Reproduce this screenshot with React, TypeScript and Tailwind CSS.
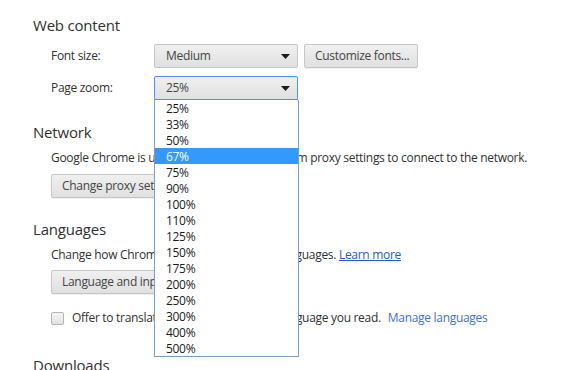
import React from 'react';

const zoomLevels = ['25%', '33%', '50%', '67%', '75%', '90%', '100%', '110%', '125%', '150%', '175%', '200%', '250%', '300%', '400%', '500%'];

const Arrow = () => (
  <svg width="9" height="5" viewBox="0 0 9 5" className="shrink-0">
    <path d="M0 0 H9 L4.5 5 Z" fill="#1a1a1a" />
  </svg>
);

const Button: React.FC<{ children: React.ReactNode; className?: string }> = ({ children, className = '' }) => (
  <div
    className={`h-[24px] flex items-center whitespace-nowrap overflow-hidden px-[10px] border border-[#c5c5c5] rounded-[2px] bg-gradient-to-b from-[#f0f0f0] to-[#e0e0e0] shadow-[0_1px_0_rgba(0,0,0,0.06)] text-[#444] ${className}`}
  >
    {children}
  </div>
);

export default function App() {
  return (
    <div
      className="relative w-[577px] h-[370px] overflow-hidden bg-white text-[12px] tracking-[-0.3px] text-[#303030]"
      style={{ fontFamily: '"Open Sans", "Noto Sans", sans-serif' }}
    >
      <div className="pl-[33px] pt-[15px]">
        {/* Web content */}
        <h2 className="text-[15px] leading-[20px] tracking-[-0.2px]">Web content</h2>
        <div className="pl-[18px] mt-[9px] flex flex-col gap-[8px]">
          <div className="flex items-center h-[24px]">
            <span className="w-[103px]">Font size:</span>
            <div className="w-[144px] h-[24px] flex items-center justify-between pl-[11px] pr-[7px] border border-[#c5c5c5] rounded-[2px] bg-gradient-to-b from-[#f0f0f0] to-[#e0e0e0] text-[#444]">
              Medium
              <Arrow />
            </div>
            <Button className="ml-[6px] w-[114px]">Customize fonts...</Button>
          </div>
          <div className="flex items-center h-[24px]">
            <span className="w-[103px]">Page zoom:</span>
            <div className="w-[144px] h-[24px] flex items-center justify-between pl-[11px] pr-[7px] border border-[#4d90fe] rounded-t-[2px] bg-gradient-to-b from-[#f0f0f0] to-[#e0e0e0] text-[#444]">
              25%
              <Arrow />
            </div>
          </div>
        </div>

        {/* Network */}
        <h2 className="text-[15px] leading-[20px] tracking-[-0.2px] mt-[22px]">Network</h2>
        <div className="pl-[18px]">
          <p className="mt-[6px] leading-[20px]">
            Google Chrome is using your computer's system proxy settings to connect to the network.
          </p>
          <Button className="mt-[6px] w-[150px]">Change proxy settings...</Button>
        </div>

        {/* Languages */}
        <h2 className="text-[15px] leading-[20px] tracking-[-0.2px] mt-[21px]">Languages</h2>
        <div className="pl-[18px]">
          <p className="mt-[6px] leading-[20px]">
            Change how Chrome handles and displays languages.{' '}
            <span className="text-[#1a5ad6] underline">Learn more</span>
          </p>
          <Button className="mt-[5px] w-[170px]">Language and input settings...</Button>
          <div className="flex items-center mt-[16px] h-[16px]">
            <div className="w-[13px] h-[13px] border border-[#b5b5b5] rounded-[2px] bg-gradient-to-b from-[#f4f4f4] to-[#e2e2e2]" />
            <span className="ml-[8px]">Offer to translate pages that aren't in a language you read.</span>
            <span className="ml-[7px] text-[#3f6fd6]">Manage languages</span>
          </div>
        </div>

        {/* Downloads */}
        <h2 className="text-[15px] leading-[20px] tracking-[-0.2px] mt-[29px]">Downloads</h2>
      </div>

      {/* Open zoom dropdown */}
      <ul className="absolute left-[154px] top-[100px] w-[145px] border border-t-0 border-[#7d9ec0] bg-white">
        {zoomLevels.map((z) => (
          <li
            key={z}
            className={`h-[16px] leading-[18px] overflow-hidden pl-[11px] ${z === '67%' ? 'bg-[#3399ff] text-white' : 'text-[#1a1a1a]'}`}
          >
            {z}
          </li>
        ))}
      </ul>
    </div>
  );
}
